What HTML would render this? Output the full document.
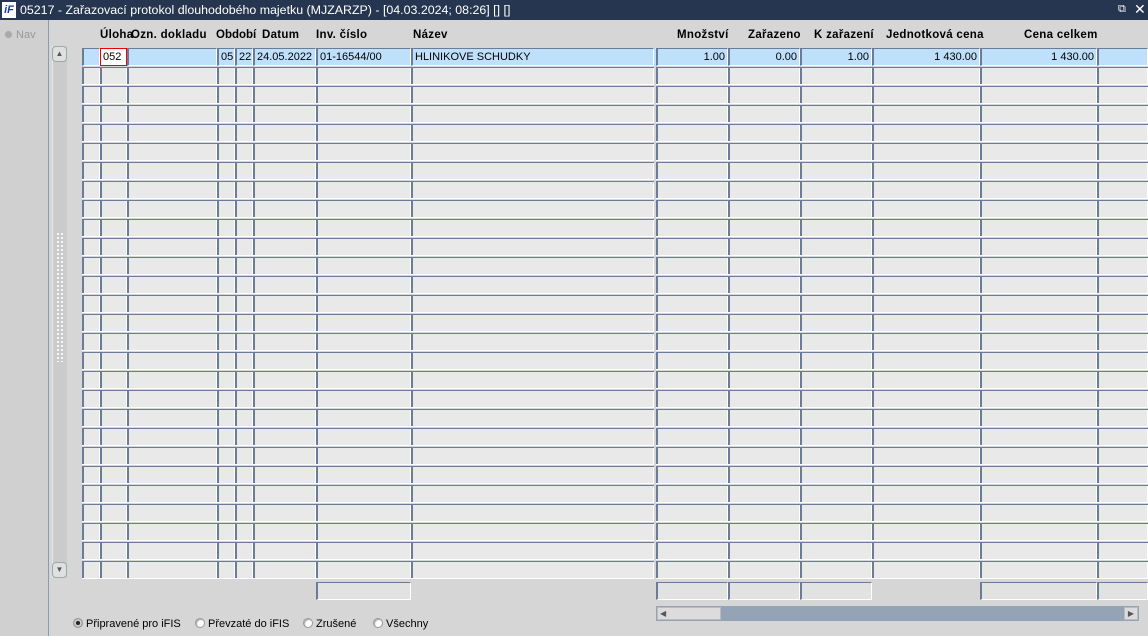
<!DOCTYPE html>
<html><head><meta charset="utf-8"><style>
*{margin:0;padding:0;box-sizing:border-box}
body{width:1148px;height:636px;overflow:hidden;background:#d6d6d6;font-family:"Liberation Sans",sans-serif;font-size:11px;color:#000;position:relative}
.a{position:absolute}
.col{position:absolute;top:48px;height:532px;
background:
repeating-linear-gradient(180deg,transparent 0 18px,#d6d6d6 18px 19px),
repeating-linear-gradient(180deg,#6b7c99 0 1px,transparent 1px 17px,#fff 17px 18px,transparent 18px 19px),
linear-gradient(90deg,#6b7c99 0 2px,transparent 2px calc(100% - 1px),#fff calc(100% - 1px)),
#e9e9e9}
.cell{position:absolute;height:18px;border-top:1px solid #6b7c99;border-left:2px solid #6b7c99;border-bottom:1px solid #fff;border-right:1px solid #fff;background:#e9e9e9;line-height:15px;padding:1px 2px 0;white-space:nowrap;overflow:hidden}
.sel{background:#bfe0fb}
.r{text-align:right}
.h{position:absolute;top:29px;font-weight:bold;font-size:11.5px;letter-spacing:.3px;white-space:nowrap}
.rad{position:absolute;top:618px;font-size:11px}
.rad i{display:inline-block;width:10px;height:10px;border-radius:50%;background:#fff;border:1px solid #999;vertical-align:-1px;margin-right:3px;box-shadow:inset 1px 1px 1px #aaa}
</style></head><body>
<div class="a" style="left:0;top:0;width:1148px;height:20px;background:#263650;color:#fff;font-size:12.4px;line-height:20px;padding-left:20px">05217 - Zařazovací protokol dlouhodobého majetku (MJZARZP) - [04.03.2024; 08:26] [] []</div>
<div class="a" style="left:2px;top:2px;width:14px;height:16px;background:#fff;color:#1a3aa0;font-weight:bold;font-style:italic;font-size:11px;line-height:16px;text-align:center">iF</div>
<div class="a" style="left:1118px;top:3px;color:#fff;font-size:11px">&#10697;</div>
<div class="a" style="left:1134px;top:1px;color:#fff;font-size:14px">✕</div>
<div class="a" style="left:0;top:20px;width:49px;height:616px;background:#d0d0d0;border-right:1px solid #8a9ab0"></div>
<div class="a" style="left:4px;top:29px;color:#999;font-size:11px"><i style="display:inline-block;width:9px;height:9px;border-radius:50%;background:#aaa;border:1px solid #ccc;vertical-align:-1px"></i> Nav</div>
<div class="a" style="left:52px;top:46px;width:15px;height:532px;background:#cbcbcb;border-left:1px solid #e6e6e6"></div>
<div class="a" style="left:52px;top:46px;width:15px;height:16px;background:#e0e0e0;border:1px solid #9aa;border-radius:4px;font-size:8px;text-align:center;color:#556;line-height:14px">▲</div>
<div class="a" style="left:52px;top:562px;width:15px;height:16px;background:#e0e0e0;border:1px solid #9aa;border-radius:4px;font-size:8px;text-align:center;color:#556;line-height:14px">▼</div>
<div class="a" style="left:56px;top:232px;width:8px;height:130px;background:radial-gradient(circle,#fff 0.8px,transparent 1.2px) 0 0/4px 4px"></div>

<div class="h" style="left:100px">Úloha</div>
<div class="h" style="left:131px">Ozn. dokladu</div>
<div class="h" style="left:216px;letter-spacing:0">Období</div>
<div class="h" style="left:262px">Datum</div>
<div class="h" style="left:316px">Inv. číslo</div>
<div class="h" style="left:413px">Název</div>
<div class="h" style="left:677px">Množství</div>
<div class="h" style="left:748px">Zařazeno</div>
<div class="h" style="left:814px">K zařazení</div>
<div class="h" style="left:886px">Jednotková cena</div>
<div class="h" style="left:1024px">Cena celkem</div>

<div class="col" style="left:82px;width:18px"></div>
<div class="col" style="left:100px;width:27px"></div>
<div class="col" style="left:127px;width:90px"></div>
<div class="col" style="left:217px;width:18px"></div>
<div class="col" style="left:235px;width:18px"></div>
<div class="col" style="left:253px;width:63px"></div>
<div class="col" style="left:316px;width:95px"></div>
<div class="col" style="left:411px;width:243px"></div>
<div class="col" style="left:656px;width:72px"></div>
<div class="col" style="left:728px;width:72px"></div>
<div class="col" style="left:800px;width:72px"></div>
<div class="col" style="left:872px;width:108px"></div>
<div class="col" style="left:980px;width:117px"></div>
<div class="col" style="left:1097px;width:51px"></div>

<div class="cell sel" style="top:48px;left:82px;width:18px"></div>
<div class="cell sel" style="top:48px;left:100px;width:27px;border:1px solid #e00;background:#fff">052</div>
<div class="cell sel" style="top:48px;left:127px;width:90px"></div>
<div class="cell sel" style="top:48px;left:217px;width:18px">05</div>
<div class="cell sel" style="top:48px;left:235px;width:18px">22</div>
<div class="cell sel" style="top:48px;left:253px;width:63px">24.05.2022</div>
<div class="cell sel" style="top:48px;left:316px;width:95px">01-16544/00</div>
<div class="cell sel" style="top:48px;left:411px;width:243px">HLINIKOVE SCHUDKY</div>
<div class="a" style="left:654px;top:48px;width:2px;height:18px;background:#bfe0fb"></div>
<div class="cell sel r" style="top:48px;left:656px;width:72px">1.00</div>
<div class="cell sel r" style="top:48px;left:728px;width:72px">0.00</div>
<div class="cell sel r" style="top:48px;left:800px;width:72px">1.00</div>
<div class="cell sel r" style="top:48px;left:872px;width:108px">1 430.00</div>
<div class="cell sel r" style="top:48px;left:980px;width:117px">1 430.00</div>
<div class="cell sel" style="top:48px;left:1097px;width:51px"></div>

<div class="cell" style="top:582px;left:316px;width:95px;background:#e2e2e2"></div>
<div class="cell" style="top:582px;left:656px;width:72px;background:#e2e2e2"></div>
<div class="cell" style="top:582px;left:728px;width:72px;background:#e2e2e2"></div>
<div class="cell" style="top:582px;left:800px;width:72px;background:#e2e2e2"></div>
<div class="cell" style="top:582px;left:980px;width:117px;background:#e2e2e2"></div>
<div class="cell" style="top:582px;left:1097px;width:51px;background:#e2e2e2"></div>

<div class="a" style="left:656px;top:606px;width:483px;height:15px;background:#94a3b6"></div>
<div class="a" style="left:657px;top:607px;width:64px;height:13px;background:#dcdcdc;border:1px solid #bbb;font-size:8px;line-height:11px;color:#556;padding-left:2px">◀</div>
<div class="a" style="left:1124px;top:607px;width:14px;height:13px;background:#dcdcdc;border:1px solid #bbb;font-size:8px;line-height:11px;color:#556;text-align:center">▶</div>

<div class="rad" style="left:73px"><i style="background:#222;box-shadow:inset 0 0 0 2px #ccc"></i>Připravené pro iFIS</div>
<div class="rad" style="left:195px"><i></i>Převzaté do iFIS</div>
<div class="rad" style="left:303px"><i></i>Zrušené</div>
<div class="rad" style="left:373px"><i></i>Všechny</div>
</body></html>
